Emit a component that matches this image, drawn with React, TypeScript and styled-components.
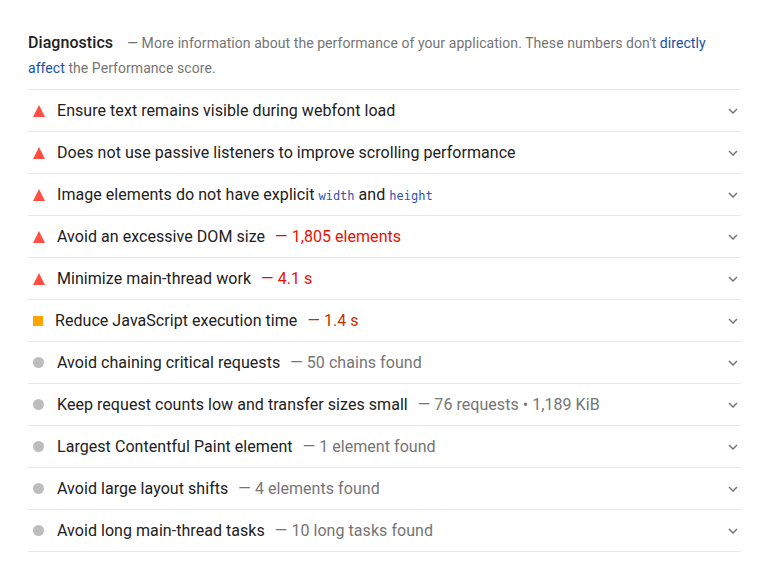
import React from "react";
import styled, { createGlobalStyle, css } from "styled-components";

const Global = createGlobalStyle`
  html, body { margin: 0; padding: 0; background: #fff; }
  body { font-family: Roboto, "Liberation Sans", Arial, sans-serif; -webkit-font-smoothing: antialiased; }
`;

const Page = styled.div`
  padding: 30px 30px 20px 28px;
  width: 713px;
`;

const Header = styled.div`
  padding: 0 24px 8px 0;
  font-size: 14px;
  line-height: 25px;
  letter-spacing: 0.06px;
  color: #757575;
`;

const GroupTitle = styled.span`
  font-size: 16px;
  font-weight: 500;
  color: #212121;
  margin-right: 14px;
`;

const Link = styled.a`
  color: #174ea6;
  text-decoration: none;
`;

const List = styled.div`
  display: flex;
  flex-direction: column;
  border-bottom: 1px solid #e8e8e8;
`;

const Row = styled.div`
  display: flex;
  align-items: center;
  height: 41px;
  border-top: 1px solid #e8e8e8;
  padding-left: 5px;
`;

type Kind = "fail" | "average" | "info";

const IconBox = styled.div<{ $kind: Kind }>`
  width: ${(p) => (p.$kind === "average" ? 10 : 12)}px;
  height: 12px;
  display: flex;
  align-items: center;
  justify-content: flex-start;
  margin-right: 12px;
  flex-shrink: 0;
`;

const Square = styled.div`
  width: 10px;
  height: 10px;
  background: #ffa400;
`;

const Circle = styled.div`
  width: 11px;
  height: 11px;
  border-radius: 50%;
  background: #bdbdbd;
`;

const Title = styled.div`
  flex: 1;
  font-size: 16px;
  letter-spacing: 0.05px;
  color: #212121;
  white-space: nowrap;
`;

const Code = styled.code`
  font-family: "DejaVu Sans Mono", "Liberation Mono", monospace;
  font-size: 12px;
  letter-spacing: 0;
  color: #3152b0;
`;

const Display = styled.span<{ $kind: Kind }>`
  margin-left: 10px;
  ${(p) =>
    p.$kind === "fail"
      ? css`color: #eb0f00;`
      : p.$kind === "average"
      ? css`color: #c33300;`
      : css`color: #757575;`}
`;

const Chevron = styled.svg`
  width: 18px;
  height: 18px;
  fill: #757575;
  flex-shrink: 0;
  margin-right: -1px;
`;

const Icon: React.FC<{ kind: Kind }> = ({ kind }) => (
  <IconBox $kind={kind}>
    {kind === "fail" ? (
      <svg width="12" height="12" viewBox="0 0 12 12">
        <polygon points="6,0 12,12 0,12" fill="#ff4e42" />
      </svg>
    ) : kind === "average" ? (
      <Square />
    ) : (
      <Circle />
    )}
  </IconBox>
);

type Audit = { kind: Kind; title: React.ReactNode; display?: string };

const audits: Audit[] = [
  { kind: "fail", title: "Ensure text remains visible during webfont load" },
  { kind: "fail", title: "Does not use passive listeners to improve scrolling performance" },
  {
    kind: "fail",
    title: (
      <>
        Image elements do not have explicit <Code>width</Code> and <Code>height</Code>
      </>
    ),
  },
  { kind: "fail", title: "Avoid an excessive DOM size", display: "1,805 elements" },
  { kind: "fail", title: "Minimize main-thread work", display: "4.1 s" },
  { kind: "average", title: "Reduce JavaScript execution time", display: "1.4 s" },
  { kind: "info", title: "Avoid chaining critical requests", display: "50 chains found" },
  {
    kind: "info",
    title: "Keep request counts low and transfer sizes small",
    display: "76 requests • 1,189 KiB",
  },
  { kind: "info", title: "Largest Contentful Paint element", display: "1 element found" },
  { kind: "info", title: "Avoid large layout shifts", display: "4 elements found" },
  { kind: "info", title: "Avoid long main-thread tasks", display: "10 long tasks found" },
];

export default function App() {
  return (
    <Page>
      <Global />
      <Header>
        <GroupTitle>Diagnostics</GroupTitle>— More information about the performance of your
        application. These numbers don't <Link href="#">directly affect</Link> the Performance
        score.
      </Header>
      <List>
        {audits.map((a, i) => (
          <Row key={i}>
            <Icon kind={a.kind} />
            <Title>
              {a.title}
              {a.display && <Display $kind={a.kind}>— {a.display}</Display>}
            </Title>
            <Chevron viewBox="0 0 24 24">
              <path d="M7.41 8.59L12 13.17l4.59-4.58L18 10l-6 6-6-6 1.41-1.41z" />
            </Chevron>
          </Row>
        ))}
      </List>
    </Page>
  );
}
